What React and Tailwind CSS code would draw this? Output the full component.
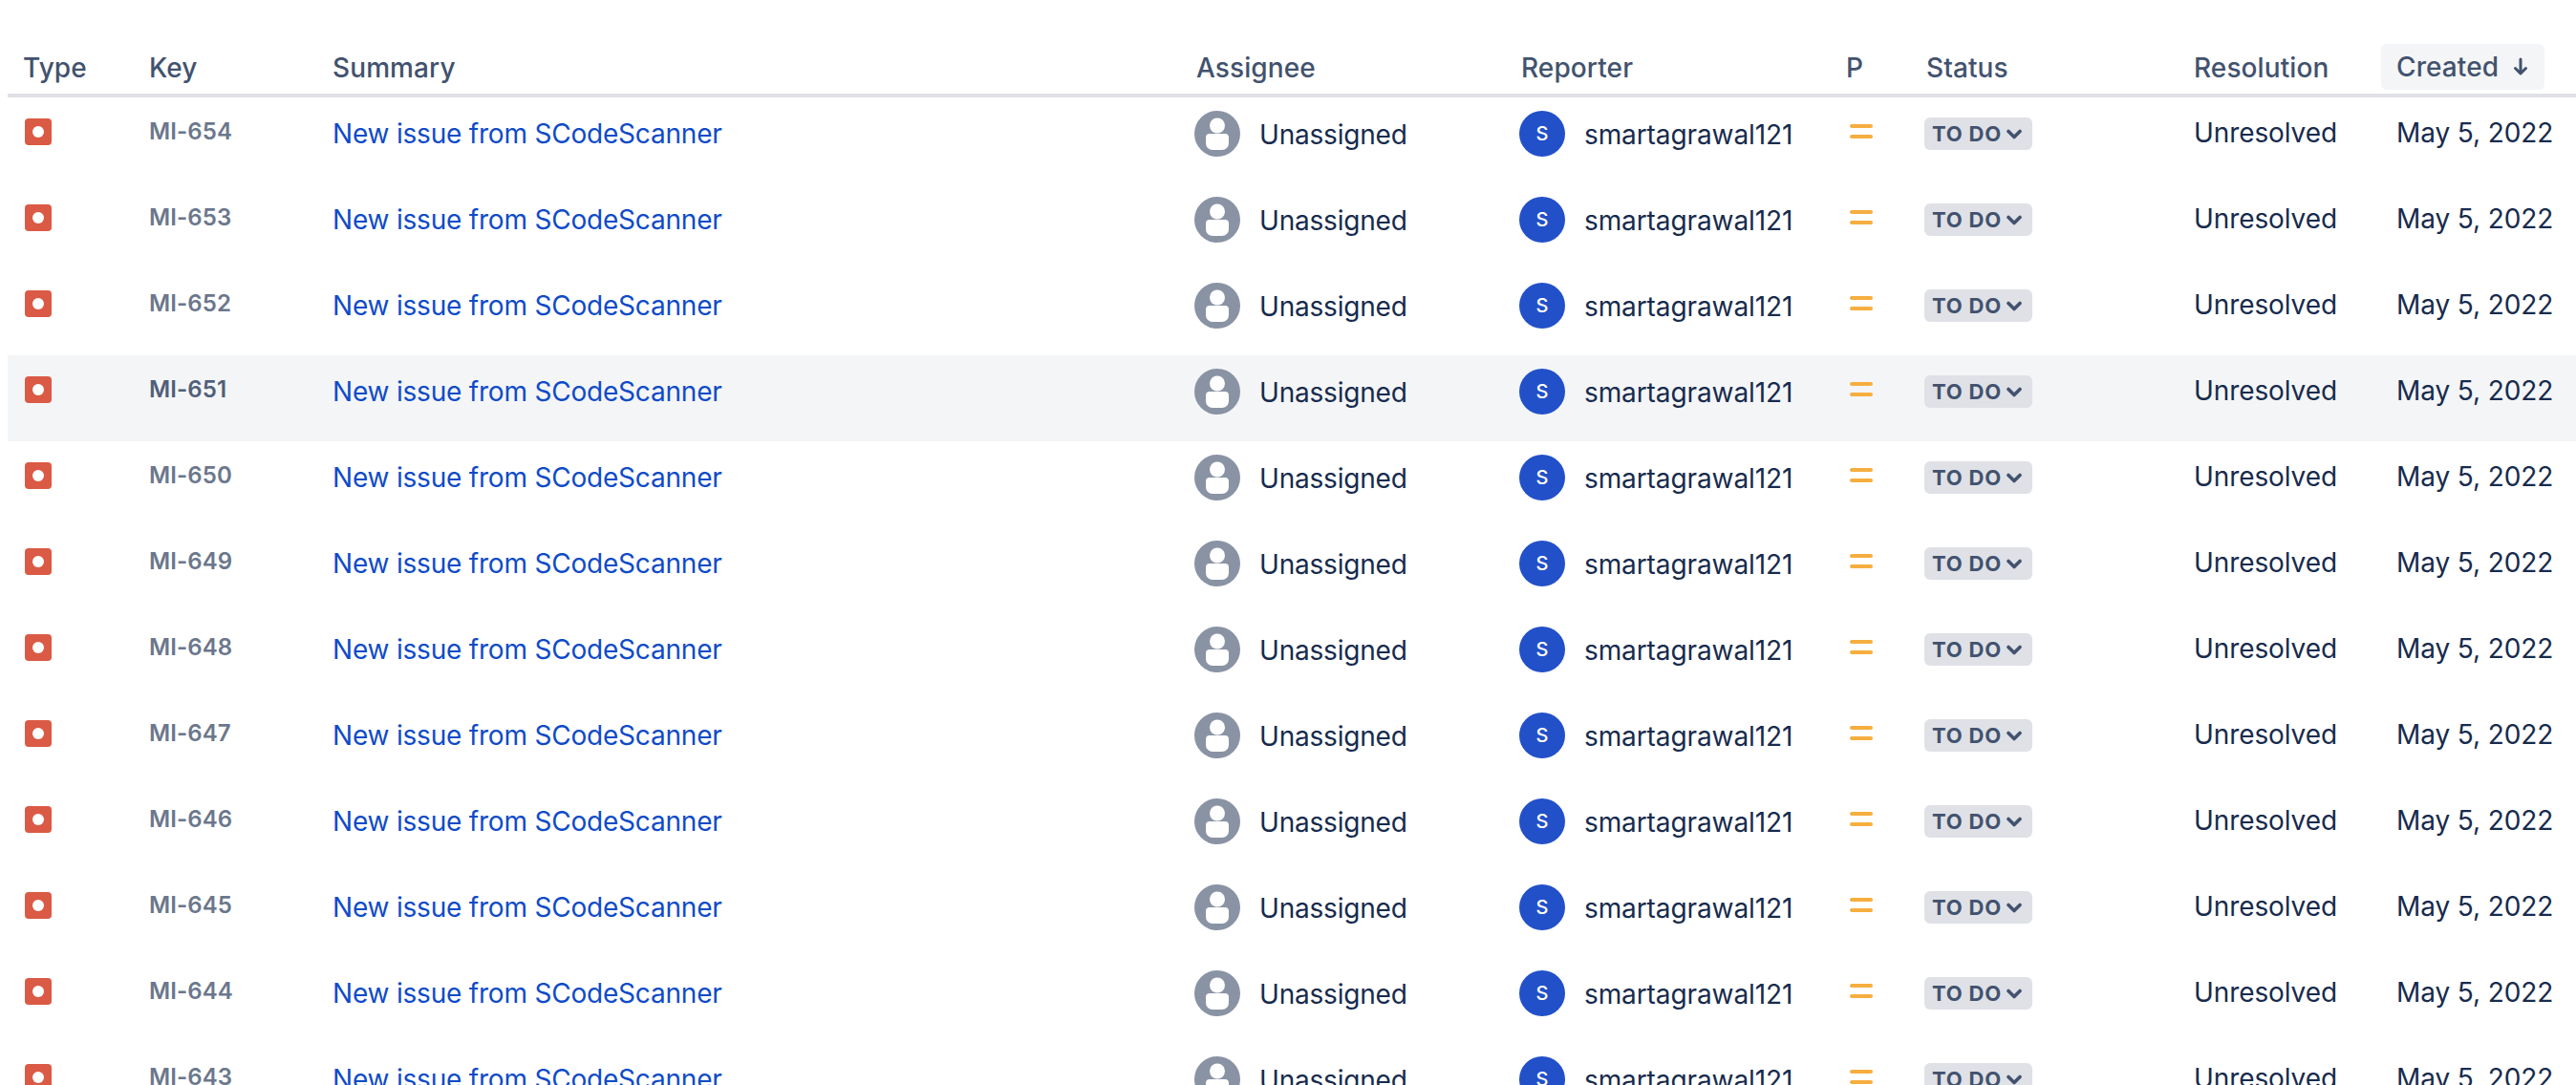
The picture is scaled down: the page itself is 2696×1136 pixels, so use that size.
const KEYS = [654, 653, 652, 651, 650, 649, 648, 647, 646, 645, 644, 643];
const COLS = "grid grid-cols-[132px_192px_902px_340px_342px_82px_282px_212px_204px]";

function BugIcon() {
  return (
    <div className="w-[28px] h-[28px] rounded-[4px] bg-[#DB5A45] flex items-center justify-center">
      <div className="w-[12px] h-[12px] rounded-full bg-white" />
    </div>
  );
}

function UnassignedAvatar() {
  return (
    <svg width="48" height="48" viewBox="0 0 48 48" className="shrink-0">
      <circle cx="24" cy="24" r="24" fill="#8993A4" />
      <circle cx="24" cy="15.5" r="8" fill="#fff" />
      <path d="M12 28a4 4 0 0 1 4-4h16a4 4 0 0 1 4 4v6a7 7 0 0 1-7 7H19a7 7 0 0 1-7-7z" fill="#fff" />
    </svg>
  );
}

function ReporterAvatar() {
  return (
    <div className="w-[48px] h-[48px] shrink-0 rounded-full bg-[#2250C9] flex items-center justify-center text-white text-[20px] font-medium">
      S
    </div>
  );
}

function HeaderCell({ label, className }) {
  return <div className={`text-[28px] leading-[36px] font-medium tracking-[0.1px] text-[#42526E] ${className}`}>{label}</div>;
}

function IssueRow({ num }) {
  const hovered = num === 651;
  return (
    <div className={`${COLS} h-[90px] text-[#172B4D] text-[28px] ${hovered ? "bg-[#F4F5F7]" : ""}`}>
      <div className="pl-[18px] pt-[22px]">
        <BugIcon />
      </div>
      <div className={`pl-[16px] pt-[18px] text-[24px] leading-[36px] font-semibold tracking-[0.1px] ${hovered ? "text-[#505F79]" : "text-[#6B778C]"}`}>
        MI-{num}
      </div>
      <div className="pl-[16px] pt-[18px] leading-[40px] tracking-[-0.2px] text-[#0F4BC8]">New issue from SCodeScanner</div>
      <div className="pl-[16px] pt-[14px] flex items-start gap-[20px]">
        <UnassignedAvatar />
        <span className="leading-[48px] pt-[1px] tracking-[-0.2px]">Unassigned</span>
      </div>
      <div className="pl-[16px] pt-[14px] flex items-start gap-[20px]">
        <ReporterAvatar />
        <span className="leading-[48px] pt-[1px] tracking-[-0.1px]">smartagrawal121</span>
      </div>
      <div className="pl-[20px] pt-[28px] flex flex-col gap-[7px]">
        <div className="w-[24px] h-[4px] rounded-full bg-[#F6AE3F]" />
        <div className="w-[24px] h-[4px] rounded-full bg-[#F6AE3F]" />
      </div>
      <div className="pl-[16px] pt-[21px]">
        <div className="w-[113px] h-[34px] rounded-[6px] bg-[#DFE1E6] text-[#42526E] flex items-center pl-[8px] gap-[5px] text-[22px] font-bold tracking-[0.8px]">
          <span className="leading-[34px]">TO DO</span>
          <svg width="16" height="16" viewBox="0 0 16 16" fill="none">
            <path d="M2 5.5l6 6 6-6" stroke="#42526E" strokeWidth="3.6" strokeLinecap="round" strokeLinejoin="round" />
          </svg>
        </div>
      </div>
      <div className="pl-[16px] pt-[17px] leading-[40px] tracking-[-0.1px]">Unresolved</div>
      <div className="pl-[16px] pt-[17px] leading-[40px] tracking-[-0.1px] whitespace-nowrap">May 5, 2022</div>
    </div>
  );
}

export default function App() {
  return (
    <div className="h-screen overflow-hidden bg-white pl-[8px] font-['Inter',sans-serif]">
      <div className={`${COLS} h-[102px] items-end border-b-[4px] border-[#DFE1E6]`}>
        <HeaderCell label="Type" className="pl-[16px] pb-[9px]" />
        <HeaderCell label="Key" className="pl-[16px] pb-[9px]" />
        <HeaderCell label="Summary" className="pl-[16px] pb-[9px]" />
        <HeaderCell label="Assignee" className="pl-[18px] pb-[9px]" />
        <HeaderCell label="Reporter" className="pl-[18px] pb-[9px]" />
        <HeaderCell label="P" className="pl-[16px] pb-[9px]" />
        <HeaderCell label="Status" className="pl-[18px] pb-[9px]" />
        <HeaderCell label="Resolution" className="pl-[16px] pb-[9px]" />
        <div className="pb-[4px]">
          <div className="w-[171px] h-[48px] rounded-[6px] bg-[#F4F5F7] flex items-center pl-[16px] gap-[14px] text-[28px] tracking-[0.1px] font-medium text-[#42526E]">
            Created
            <svg width="18" height="20" viewBox="0 0 18 20" fill="none">
              <path d="M9 2v15M3.5 11.5L9 17l5.5-5.5" stroke="#42526E" strokeWidth="3" strokeLinecap="round" strokeLinejoin="round" />
            </svg>
          </div>
        </div>
      </div>
      {KEYS.map((num) => (
        <IssueRow key={num} num={num} />
      ))}
    </div>
  );
}
